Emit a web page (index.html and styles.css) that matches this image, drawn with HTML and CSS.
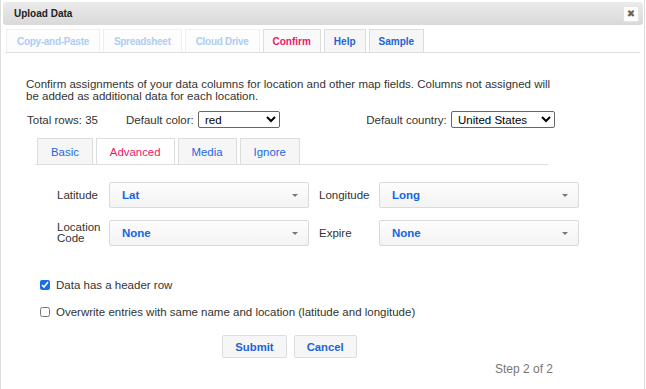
FILE: index.html
```html
<!DOCTYPE html>
<html lang="en">
<head>
    <meta charset="UTF-8">
    <meta name="viewport" content="width=device-width, initial-scale=1.0">
    <title>Upload Data</title>
    <link rel="stylesheet" href="styles.css">
</head>
<body>
    <div class="dialog">
        <div class="titlebar">
            <span class="title">Upload Data</span>
            <button class="close" title="Close">&#10006;</button>
        </div>

        <!-- upload steps -->
        <ul class="tabs step-tabs">
            <li class="disabled">Copy-and-Paste</li>
            <li class="disabled">Spreadsheet</li>
            <li class="disabled">Cloud Drive</li>
            <li class="active">Confirm</li>
            <li>Help</li>
            <li>Sample</li>
        </ul>

        <div class="pane">
            <p class="intro">Confirm assignments of your data columns for location and other map fields. Columns not assigned will be added as additional data for each location.</p>

            <div class="defaults">
                <span class="total">Total rows: 35</span>
                <label class="default">Default color:
                    <select class="color-select">
                        <option>red</option>
                    </select>
                </label>
                <label class="default country">Default country:
                    <select class="country-select">
                        <option>United States</option>
                    </select>
                </label>
            </div>

            <ul class="tabs field-tabs">
                <li>Basic</li>
                <li class="active">Advanced</li>
                <li>Media</li>
                <li>Ignore</li>
            </ul>

            <div class="fields">
                <span class="field-label">Latitude</span>
                <div class="pick"><span class="value">Lat</span><span class="caret"></span></div>
                <span class="field-label">Longitude</span>
                <div class="pick"><span class="value">Long</span><span class="caret"></span></div>

                <span class="field-label">Location<br>Code</span>
                <div class="pick"><span class="value">None</span><span class="caret"></span></div>
                <span class="field-label">Expire</span>
                <div class="pick"><span class="value">None</span><span class="caret"></span></div>
            </div>

            <label class="check first"><input type="checkbox" checked> Data has a header row</label>
            <label class="check"><input type="checkbox"> Overwrite entries with same name and location (latitude and longitude)</label>

            <div class="actions">
                <button class="btn">Submit</button>
                <button class="btn">Cancel</button>
            </div>

            <div class="step">Step 2 of 2</div>
        </div>
    </div>
</body>
</html>
```

FILE: styles.css
```css
body {
    margin: 0;
    background: #fff;
    font-family: "Liberation Sans", Arial, sans-serif;
    font-size: 11.5px;
    color: #333;
}

.dialog {
    width: 645px;
    height: 389px;
    box-sizing: border-box;
    padding: 2px 1px 0 2px;
    border-left: 1px solid #ddd;
    border-right: 1px solid #ddd;
}

.titlebar {
    height: 23px;
    display: flex;
    align-items: center;
    justify-content: space-between;
    padding: 0 4px 0 11px;
    background: linear-gradient(#ebebeb, #d9d9d9);
    border-radius: 3px;
}

.title {
    font-size: 10px;
    font-weight: bold;
    color: #222;
}

.close {
    width: 16px;
    height: 16px;
    padding: 0;
    border: 1px solid #e4e4e4;
    border-radius: 2px;
    background: #fff;
    color: #666;
    font-size: 10px;
    line-height: 14px;
    font-family: "DejaVu Sans", sans-serif;
}

/* tab strips */
.tabs {
    display: flex;
    gap: 3px;
    list-style: none;
    margin: 0;
    border-bottom: 1px solid #ddd;
}

.tabs li {
    display: flex;
    align-items: center;
    border: 1px solid #ddd;
    border-bottom: none;
    background: #f6f6f6;
    color: #2361d8;
}

.tabs li.active {
    background: #fafafa;
    color: #ee1769;
}

.step-tabs {
    margin: 4px 3px 0 2px;
    padding: 0 0 0 1px;
}

.step-tabs li {
    height: 22px;
    padding: 0 9px;
    font-size: 10px;
    font-weight: bold;
}

.step-tabs li.disabled {
    padding: 0 10px;
    background: #fdfdfd;
    border-color: #efefef;
    color: #aecdf3;
    letter-spacing: -0.3px;
}

.pane {
    padding: 25px 90px 0 23px;
}

.intro {
    margin: 0;
    line-height: 12px;
}

.defaults {
    display: flex;
    align-items: center;
    margin-top: 9px;
    margin-right: -2px;
}

.total {
    width: 99px;
    padding-left: 1px;
}

.default select {
    margin-left: 1px;
    height: 17px;
    padding: 0 2px;
    font-family: inherit;
    font-size: 11.5px;
    color: #000;
    border: 1px solid #666;
    border-radius: 2px;
    background: #fff;
}

.color-select {
    width: 82px;
}

.country-select {
    width: 104px;
}

.country {
    margin-left: auto;
}

.field-tabs {
    margin: 10px 5px 0 9px;
    padding: 0 0 0 2px;
}

.field-tabs li {
    height: 25px;
    padding: 0 13px;
    font-size: 11.4px;
    color: #1d66e5;
}

.field-tabs li.active {
    background: #fff;
    color: #ee1769;
}

.fields {
    display: grid;
    grid-template-columns: 42px 200px 50px 200px;
    column-gap: 10px;
    row-gap: 12px;
    align-items: center;
    margin: 17px 0 0 31px;
}

.field-label {
    line-height: 11px;
    white-space: nowrap;
}

.pick {
    display: flex;
    align-items: center;
    height: 26px;
    box-sizing: border-box;
    padding: 0 10px 0 12px;
    border: 1px solid #dadada;
    border-radius: 2px;
    background: linear-gradient(#fdfdfd, #f3f3f3);
}

.value {
    font-weight: bold;
    color: #1565e0;
}

.caret {
    margin-left: auto;
    border-top: 3px solid #777;
    border-left: 3px solid transparent;
    border-right: 3px solid transparent;
}

.check {
    display: flex;
    align-items: center;
    gap: 6px;
    height: 16px;
    margin: 11px 0 0 14px;
}

.check.first {
    margin-top: 31px;
}

.check input {
    width: 10px;
    height: 10px;
    margin: 0;
    accent-color: #1a6fe0;
}

.actions {
    display: flex;
    justify-content: center;
    gap: 7px;
    margin-top: 15px;
}

.btn {
    height: 23px;
    padding: 0 12px;
    border: 1px solid #ddd;
    border-radius: 2px;
    background: #f6f6f6;
    color: #1e63d8;
    font-family: inherit;
    font-size: 11.3px;
    font-weight: bold;
}

.step {
    margin-top: 4px;
    text-align: right;
    color: #777;
    font-size: 12px;
}
```
